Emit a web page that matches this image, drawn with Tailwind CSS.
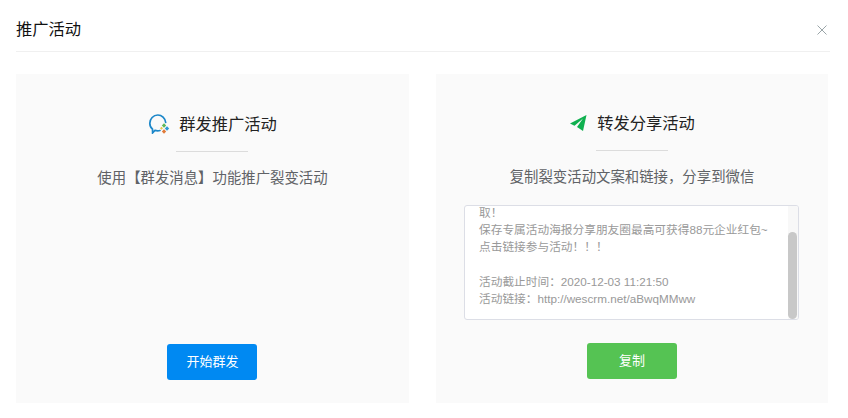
<!DOCTYPE html>
<html lang="zh-CN">
<head>
    <meta charset="UTF-8">
    <meta name="viewport" content="width=device-width, initial-scale=1.0">
    <title>推广活动</title>
    <script src="https://cdn.jsdelivr.net/npm/@tailwindcss/browser@4"></script>
</head>
<body class="bg-white h-[418px] w-[848px] overflow-hidden font-['Liberation_Sans','Noto_Sans_CJK_SC',sans-serif]">

    <!-- 标题栏 -->
    <div class="ml-4 w-[814px] h-[52px] border-b border-[#f0f0f0] flex items-center justify-between pt-[8px]">
        <h1 class="text-[16.3px] text-[#111]">推广活动</h1>
        <button class="mr-[2px] text-[#9aa5a8]">
            <svg class="block" width="12" height="12" viewBox="0 0 12 12" fill="none" stroke="currentColor" stroke-width="1"><path d="M1.500 1.500l9 9M10.500 1.500l-9 9"/></svg>
        </button>
    </div>

    <div class="ml-4 mt-[22px] flex gap-[27px]">
        <!-- 群发 -->
        <div class="w-[393px] h-[329px] bg-[#fafafa] flex flex-col items-center pt-[38px]">
            <div class="flex items-center gap-[9px] h-6">
                <svg width="22" height="20" viewBox="-1 0 22 20" fill="none">
                    <path d="M11 16.500c-.7.200-1.500.3-2.300.3-1 0-1.900-.1-2.800-.4L3.600 18.900l-.1-3.700C1.800 13.800 .8 11.700 .8 9.300 .8 4.800 4.300 1 8.800 1c4 0 7.400 3 7.900 7.500" stroke="#1c87c9" stroke-width="1.700" stroke-linecap="round"/>
                    <path d="M15 9.300l2.200 2.200-2.200 2.200-2.200-2.200z" fill="#5fb85a"/>
                    <path d="M18 12.300l2.200 2.200-2.200 2.200-2.200-2.200z" fill="#2e9ad6"/>
                    <path d="M15 15.300l2.200 2.200-2.200 2.200-2.200-2.200z" fill="#e07b3a"/>
                    <path d="M12.500 12.800l1.500 1.500-1.500 1.500-1.500-1.500z" fill="#e8c64a"/>
                </svg>
                <h2 class="text-[16.3px] text-[#222]">群发推广活动</h2>
            </div>
            <div class="w-[72px] h-px bg-[#dcdcdc] mt-[15px] mr-px"></div>
            <p class="mt-4 text-[14.4px] text-[#606266] leading-[20px]">使用【群发消息】功能推广裂变活动</p>
            <button class="mt-[156px] mr-px pl-px w-[90px] h-9 rounded-[3px] bg-[#0089f2] text-white text-[13px]">开始群发</button>
        </div>

        <!-- 转发 -->
        <div class="w-[392px] h-[329px] bg-[#fafafa] flex flex-col items-center pt-[37px]">
            <div class="flex items-center gap-[10px] h-6">
                <svg width="18" height="18" viewBox="0 0 18 18"><path d="M17.500 1L1 9.500l4.500 2.200L14 4.500 8 13l6 4z" fill="#0fb04f"/></svg>
                <h2 class="text-[16.3px] text-[#222]">转发分享活动</h2>
            </div>
            <div class="w-[72px] h-px bg-[#dcdcdc] mt-[15px]"></div>
            <p class="mt-4 text-[14.4px] text-[#606266] leading-[20px]">复制裂变活动文案和链接&#65292;分享到微信</p>
            <div class="relative mt-[18px] mr-px w-[335px] h-[115px] bg-white border border-[#dcdee6] rounded-[3px] overflow-hidden">
                <div class="-mt-[2px] pl-[14px] text-[11.7px] leading-[17.2px] text-[#999] whitespace-pre-line">取&#65281;
保存专属活动海报分享朋友圈最高可获得88元企业红包~
点击链接参与活动&#65281;&#65281;&#65281;

活动截止时间&#65306;2020-12-03 11:21:50
活动链接&#65306;http://wescrm.net/aBwqMMww</div>
                <div class="absolute right-0 top-0 w-[10px] h-full bg-[#f8f8f8]">
                    <div class="absolute top-[26px] bottom-0 w-[9px] bg-[#c8c8c8] rounded-[5px]"></div>
                </div>
            </div>
            <button class="mt-[23px] w-[90px] h-9 rounded-[3px] bg-[#55c353] text-white text-[13px]">复制</button>
        </div>
    </div>

</body>
</html>
